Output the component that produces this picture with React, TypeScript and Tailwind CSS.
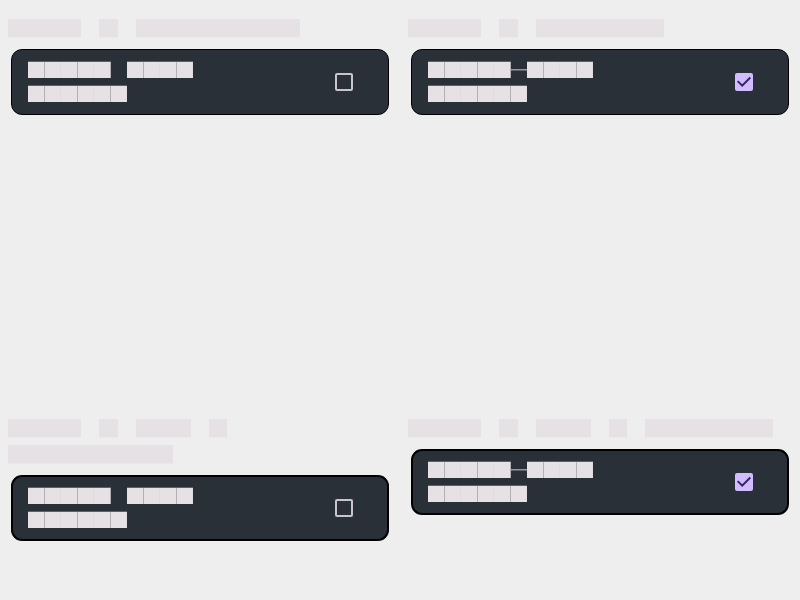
import { useState } from "react";

type TaskProps = {
  id: string;
  heading: string[];
  done?: boolean;
  thick?: boolean;
};

const cells =
  "h-[17px] border-t border-[#5f5f65] bg-[repeating-linear-gradient(90deg,#e6e1e5_0_16px,#b3b0b5_16px_17px,#e6e1e5_17px_32px,#e0dbdf_32px_33px)]";

function Task({ id, heading, done = false, thick = false }: TaskProps) {
  const [checked, setChecked] = useState(done);
  return (
    <section className="min-w-0 pt-[19px]">
      <h2 className="flex flex-wrap gap-x-[18px] gap-y-[7px] px-2">
        {heading.map((width, i) => (
          <span key={i} className={`h-[19px] border-b border-[#eae8ea] bg-[#e6e1e5] ${width}`} />
        ))}
      </h2>
      <div
        className={`mx-[11px] mt-[11px] flex h-[66px] items-center justify-between rounded-[11px] border-black bg-[#2a3038] ${
          thick ? "border-2 pr-[34px] pl-[15px]" : "border pr-[35px] pl-4"
        }`}
      >
        <label htmlFor={id} className="flex flex-col gap-[7px] pb-px">
          <span className="flex items-start">
            <span className={`w-[83px] ${cells}`} />
            <span
              className={`mt-2 h-[2px] w-4 ${checked ? "border-b border-[#5f6369] bg-[#98979d]" : ""}`}
            />
            <span className={`w-[66px] ${cells}`} />
          </span>
          <span className={`w-[99px] ${cells}`} />
        </label>
        <span className="grid size-[18px] place-items-center">
          <input
            id={id}
            type="checkbox"
            aria-label="Done"
            checked={checked}
            onChange={(e) => setChecked(e.target.checked)}
            className="col-start-1 row-start-1 size-[18px] appearance-none rounded-xs border-2 border-[#cac4d0] checked:border-[#d0bcff] checked:bg-[#d0bcff]"
          />
          {checked && (
            <svg
              viewBox="0 0 18 18"
              className="pointer-events-none col-start-1 row-start-1 size-[18px]"
              fill="none"
              stroke="#381e72"
              strokeWidth="2"
            >
              <path d="M2.7 8.1 7.2 12.6 15.3 4.5" />
            </svg>
          )}
        </span>
      </div>
    </section>
  );
}

export default function App() {
  return (
    <main className="grid min-h-screen grid-cols-2 grid-rows-[400px_auto] bg-[#eeeeee]">
      <Task id="task-1" heading={["w-[73px]", "w-[19px]", "w-[164px]"]} />
      <Task id="task-2" heading={["w-[73px]", "w-[19px]", "w-[128px]"]} done />
      <Task
        id="task-3"
        heading={["w-[73px]", "w-[19px]", "w-[55px]", "w-[18px]", "w-[165px]"]}
        thick
      />
      <Task
        id="task-4"
        heading={["w-[73px]", "w-[19px]", "w-[55px]", "w-[18px]", "w-[128px]"]}
        done
        thick
      />
    </main>
  );
}
